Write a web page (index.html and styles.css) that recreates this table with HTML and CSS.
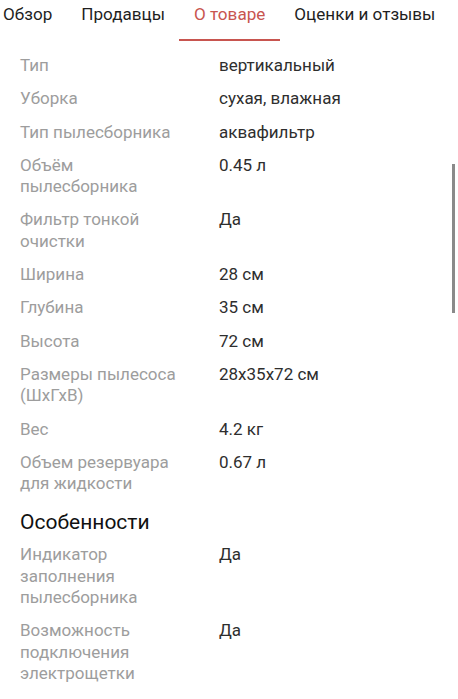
FILE: index.html
```html
<!DOCTYPE html>
<html lang="ru">
<head>
<meta charset="utf-8">
<link rel="stylesheet" href="styles.css">
</head>
<body>
<nav class="tabs">
  <div class="tab">Обзор</div>
  <div class="tab">Продавцы</div>
  <div class="tab active">О товаре</div>
  <div class="tab">Оценки и отзывы</div>
</nav>
<main class="content">
  <div class="specs">
    <div class="row"><div class="label">Тип</div><div class="value">вертикальный</div></div>
    <div class="row"><div class="label">Уборка</div><div class="value">сухая, влажная</div></div>
    <div class="row"><div class="label">Тип пылесборника</div><div class="value">аквафильтр</div></div>
    <div class="row"><div class="label">Объём пылесборника</div><div class="value">0.45 л</div></div>
    <div class="row"><div class="label">Фильтр тонкой очистки</div><div class="value">Да</div></div>
    <div class="row"><div class="label">Ширина</div><div class="value">28 см</div></div>
    <div class="row"><div class="label">Глубина</div><div class="value">35 см</div></div>
    <div class="row"><div class="label">Высота</div><div class="value">72 см</div></div>
    <div class="row"><div class="label">Размеры пылесоса (ШхГхВ)</div><div class="value">28x35x72 см</div></div>
    <div class="row"><div class="label">Вес</div><div class="value">4.2 кг</div></div>
    <div class="row"><div class="label">Объем резервуара для жидкости</div><div class="value">0.67 л</div></div>
  </div>
  <h2 class="section">Особенности</h2>
  <div class="specs">
    <div class="row"><div class="label">Индикатор заполнения пылесборника</div><div class="value">Да</div></div>
    <div class="row"><div class="label">Возможность подключения электрощетки</div><div class="value">Да</div></div>
  </div>
</main>
<div class="scrollbar"></div>
</body>
</html>
```
FILE: styles.css
```css
html, body {
  margin: 0;
  padding: 0;
  background: #fff;
  font-family: Roboto, "Noto Sans", sans-serif;
  overflow: hidden;
}
.tabs {
  position: fixed;
  top: 0;
  left: 0;
  right: 0;
  height: 42px;
  background: #fff;
  display: flex;
  margin-left: -11.5px;
  z-index: 2;
}
.tab {
  padding: 3px 14.5px 0;
  font-size: 17.1px;
  line-height: 23px;
  color: #1f1f1f;
  white-space: nowrap;
  height: 38px;
  box-sizing: border-box;
}
.tab.active {
  color: #c8554f;
  border-bottom: 2px solid #c8554f;
  height: 41px;
}
.content {
  padding: 55px 0 0 20px;
}
.specs {
  display: flex;
  flex-direction: column;
  gap: 12px;
}
.row {
  display: flex;
  font-size: 17px;
  line-height: 21.3px;
}
.label {
  width: 165px;
  flex: none;
  color: #9d9d9d;
}
.value {
  margin-left: 34px;
  color: #2e2e2e;
}
.section {
  margin: 15px 0 9px;
  font-size: 21px;
  line-height: 26px;
  font-weight: 400;
  color: #111;
}
.scrollbar {
  position: fixed;
  left: 452px;
  top: 164px;
  width: 3px;
  height: 149px;
  background: #8a8a8a;
}
```
